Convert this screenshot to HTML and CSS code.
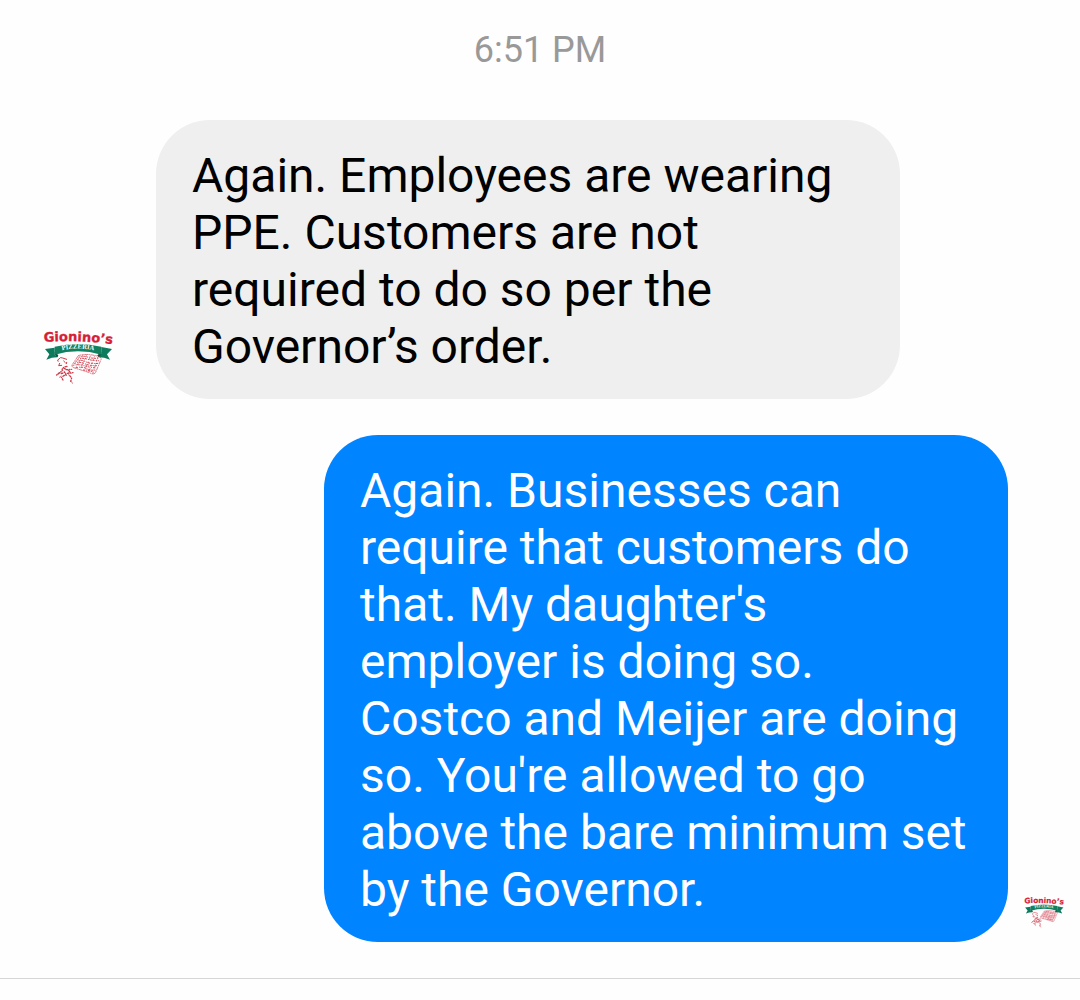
FILE: index.html
```html
<!DOCTYPE html>
<html lang="en">
<head>
<meta charset="utf-8">
<meta name="viewport" content="width=device-width, initial-scale=1">
<title>Conversation</title>
<link rel="stylesheet" href="styles.css">
</head>
<body>
<main class="thread">
  <time class="timestamp" datetime="18:51">6:51 PM</time>
  <article class="row incoming">
    <svg class="avatar" viewBox="0 -15 252 252" role="img" aria-label="Gionino’s Pizzeria">
      <g id="logo">
        <path id="arch" d="M24 66Q126 58 240 74" fill="none"/>
        <text class="logo-name"><textPath href="#arch">Gionino’s</textPath></text>
        <path fill="#0c7a5c" d="M27 87L56 83V104Q60 110 66 105L64 112Q48 112 31 119L40 103ZM228 87L196 81V102Q190 110 184 105L188 112Q204 112 222 119L213 103Z"/>
        <path fill="#08553f" d="M56 95L67 106L64 112L56 104ZM196 95L184 106L188 112L196 104Z"/>
        <path fill="#12805f" d="M56 80Q126 64 196 80V104Q126 84 56 104Z"/>
        <path id="ribbon" d="M78 91Q126 80 178 92" fill="none"/>
        <text class="logo-sub"><textPath href="#ribbon">PIZZERIA</textPath></text>
        <g fill="none" stroke="#cf3848" stroke-width="3" stroke-linecap="round">
          <path stroke-width="2" stroke-dasharray="9 4 3 4" d="M127 107Q151 99 187 109Q197 111 195 119L178 159Q170 165 161 158L113 143Q104 139 110 132Z"/>
          <path stroke-dasharray="3 6 1 5 4 5" d="M129 112Q140 106 154 111T190 115M125 118Q136 112 152 117T188 122M120 124Q137 118 149 125T187 130M116 130Q131 124 146 131T184 137M111 136Q129 132 144 137T180 144M121 143Q139 139 150 145T177 151M142 150Q155 149 173 157"/>
          <path stroke-width="2" stroke-dasharray="2 6 4 7" d="M139 107L120 142M151 107L133 147M163 108L146 151M175 110L159 155M185 112L171 159"/>
          <path d="M66 124Q62 119 69 117Q73 110 80 114L92 118M71 130L68 137L77 136M83 123L88 128M92 127L91 131"/>
          <path stroke-width="4" stroke-dasharray="5 5 1 5" d="M93 139Q76 142 79 152L70 158L62 165M84 145L98 151L105 160M76 161L86 157L92 169M94 160L111 158M85 166L76 172L81 180M101 167L107 174L104 184M91 149L107 148"/>
          <path stroke-width="2" d="M64 164L76 157M84 153L90 162M99 157L98 165M107 185L109 190M75 168L70 172"/>
        </g>
      </g>
    </svg>
    <p class="bubble">Again. Employees are wearing PPE. Customers are not required to do so per the Governor’s order.</p>
  </article>
  <article class="row outgoing">
    <p class="bubble">Again. Businesses can require that customers do that. My daughter's employer is doing so. Costco and Meijer are doing so. You're allowed to go above the bare minimum set by the Governor.</p>
    <svg class="receipt" viewBox="0 -15 252 252" role="img" aria-label="Seen by Gionino’s Pizzeria"><use href="#logo"/></svg>
  </article>
</main>
<hr class="divider">
</body>
</html>
```
FILE: styles.css
```css
* { box-sizing: border-box; }

body {
  margin: 0;
  background: #fefefe;
  font-family: Roboto, "Liberation Sans", sans-serif;
}

.thread {
  display: flex;
  flex-direction: column;
  gap: 36px;
  padding: 28px 0 36px;
}

.timestamp {
  margin-bottom: 12px;
  color: #999;
  font-size: 36px;
  line-height: 44px;
  text-align: center;
}

.row {
  display: flex;
  align-items: flex-end;
}

.incoming {
  gap: 36px;
  padding: 0 180px 0 36px;
}

.outgoing {
  gap: 12px;
  padding: 0 12px 0 324px;
}

.bubble {
  flex: 1;
  margin: 0;
  padding: 27px 36px 24px;
  border-radius: 54px;
  font-size: 48px;
  line-height: 57px;
}

.incoming .bubble {
  background: #efefef;
  color: #000;
}

.outgoing .bubble {
  background: #0084ff;
  color: #fff;
}

.avatar {
  flex: none;
  width: 84px;
  height: 84px;
}

.receipt {
  flex: none;
  width: 48px;
  height: 48px;
  margin-bottom: 6px;
}

.logo-name {
  fill: #d51f39;
  stroke: #d51f39;
  stroke-width: 1px;
  font-family: "DejaVu Sans", sans-serif;
  font-size: 39px;
  font-weight: 700;
}

.logo-sub {
  fill: #fff;
  font-family: "Liberation Serif", serif;
  font-size: 20px;
  font-weight: 700;
}

.divider {
  margin: 0;
  border: 0;
  border-top: 1px solid #d6d6d6;
}
```
